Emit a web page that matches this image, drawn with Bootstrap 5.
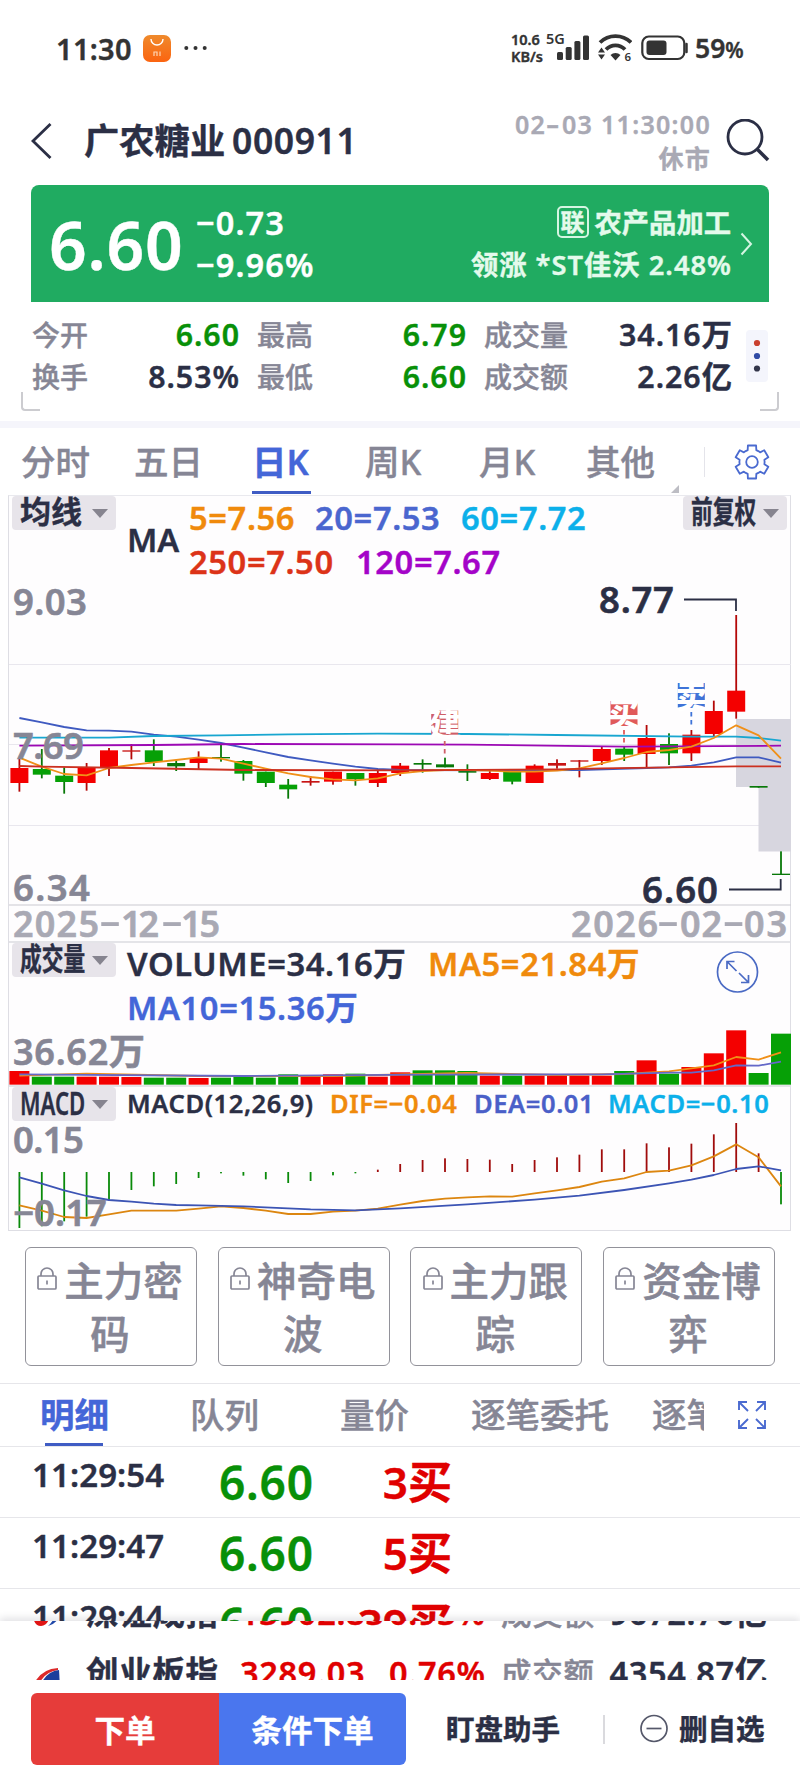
<!DOCTYPE html>
<html lang="zh-CN">
<head>
<meta charset="utf-8">
<meta name="viewport" content="width=device-width, initial-scale=1">
<title>广农糖业 000911</title>
<link href="https://cdn.jsdelivr.net/npm/bootstrap@5.3.0/dist/css/bootstrap.min.css" rel="stylesheet">
<style>
:root{--ink:#2b2f45;--mute:#868695;--pale:#a9a9b4;--up:#e00000;--down:#089008;--brand:#4466d8;--hair:#e6e6ea}
body{font-family:"Noto Sans","Noto Sans CJK SC",sans-serif;font-weight:600;color:var(--ink);background:#fff;width:800px;height:1778px;overflow:hidden;line-height:1;-webkit-text-stroke:.4px}
.cells{display:grid;align-items:center;white-space:nowrap}
.c-mute{color:var(--mute)}.c-up{color:var(--up)}.c-down{color:var(--down)}.c-brand{color:var(--brand)}
.dash{display:inline-block;font-style:normal;transform:translateY(-.06em) scaleX(1.6);margin:0 .13em}
.statusbar{height:98px;padding-bottom:2px;grid-template-columns:56px 87px 41px 327px 46px 41px 43px 54px 60px;color:#333}
.statusbar .clock{font-size:29px;letter-spacing:.3px}
.statusbar .net{font-size:14.5px;line-height:17px;font-weight:600}
.topbar{height:87px;padding-bottom:2px;grid-template-columns:31px 53px 148px 130px 348px 90px}
.topbar .stamp{font-size:25px;line-height:34px;color:var(--pale);letter-spacing:1.3px;margin-right:-1px}
.quote{margin:0 31px;height:117px;background:#20ab61;color:#fff;border-radius:8px 8px 0 0;grid-template-columns:18px 147px 200px 335px 38px}
.quote .px{font-size:66px;letter-spacing:.8px}
.quote .chg{font-size:32.5px;line-height:42px;letter-spacing:1.1px}
.quote .rel{font-size:27.3px;line-height:42px;color:#e4faec}
.rel .lead-up{letter-spacing:1px;margin-right:-1px}
.rel .tagbox{display:inline-block;border:2px solid #d5f5e2;border-radius:5px;width:32px;height:32px;font-size:24px;line-height:27px;text-align:center;margin-right:6px;vertical-align:2px;font-weight:700}
.stats{height:119px;padding:12px 0 23px 32px;grid-template-columns:1fr 68px;position:relative}
.stats dl{display:grid;grid-template-columns:56px 151px 18px 57px 152px 18px 85px 1fr;row-gap:0;line-height:42px;margin:0;font-size:28px}
.stats dt{font-weight:500;grid-column:auto}.stats dd{margin:0 -1px 0 0;text-align:right;font-size:30.3px;letter-spacing:1px}
.stats .gap-l{grid-column:4}.stats .gap-r{grid-column:7}
.more{width:22px;height:52px;background:#f4f5fc;border-radius:4px;margin-left:14px}
.corner{position:absolute;bottom:10px;width:19px;height:19px;border:solid #ccccd0;border-width:0 0 2px 2px;border-radius:0 0 0 4px;left:21px}
.corner.r{left:auto;right:21px;border-width:0 2px 2px 0;border-radius:0 0 4px 0}
.strip{height:7px;background:#f5f5fb}
.ktabs{height:67px;font-size:34.5px;font-weight:500;color:var(--mute);position:relative;grid-template-columns:21px 113px 118px 113px 114px 107px 118px 96px}
.ktabs svg,.dtabs svg{display:block}
.on{color:var(--brand);font-weight:600;position:relative}
.on::after{content:"";position:absolute;height:3px;background:#3f5cc4;left:0}
.ktabs .on::after{width:59px;bottom:-15.5px}
.ktabs span,.dtabs span{line-height:34px}
.panes{margin:0 9px 0 8px;border:1px solid #dedee4;border-top-color:#e9e9ee;background:#fefdfe}
.pane{position:relative}
.pane>svg{position:absolute;left:-9px;top:0;display:block;overflow:visible}
.pane+.pane{border-top:2px solid #e4e4e8}
.p1{height:445px}.p2{height:144px}.p3{height:145px}
.chip{position:absolute;left:3px;top:0;width:104px;height:34px;background:#e7e4ea;border-radius:4px;color:var(--ink);font-size:31px;line-height:33px;white-space:nowrap}
.chip span{position:absolute;left:8px;top:-1px;transform-origin:0 50%}
.chip::after{content:"";position:absolute;right:8px;top:13px;border:8px solid transparent;border-top:9px solid #86848f;border-bottom:0}
.narrow span{transform:scaleX(.7)}
.legend{position:relative;z-index:1;font-size:32.7px;line-height:44px;padding-left:118px;white-space:nowrap;letter-spacing:.6px}
.legend span{display:inline-block}
svg text{font-family:"Noto Sans","Noto Sans CJK SC",sans-serif;font-weight:600}
.vip{padding:16px 25px;gap:20.7px;height:152px}
.vip .btn{flex:1;height:119px;border:1.4px solid #92929a;border-radius:6px;color:var(--mute);font-size:39.5px;line-height:53px;font-weight:500;padding:2px 10px 0 8px;text-align:center;-webkit-text-stroke:.5px}
.vip svg{vertical-align:6px;margin-right:7px}
.dtabs{height:64px;border:solid var(--hair);border-width:1px 0;font-size:34.5px;font-weight:500;color:var(--mute);grid-template-columns:40px 150px 150px 131px 181px 52px 34px 62px}
.dtabs .on::after{width:58px;left:5px;bottom:-14px}
.ticks{height:174px;overflow:hidden}
.tick{height:71px;border-bottom:1px solid var(--hair);grid-template-columns:32px 187px 132px 101px;align-items:start}
.tick .t{font-size:33px;line-height:33px;padding-top:11px;letter-spacing:.1px}
.tick .p{font-size:46px;line-height:46px;padding-top:12px;letter-spacing:.8px}
.tick .v{font-size:44px;line-height:46px;padding-top:12px;text-align:right}
.indices{height:59px;overflow:hidden;position:relative;background:#fff;box-shadow:0 -3px 7px rgba(60,60,80,.14)}
.idx{height:60px;font-size:32.5px;line-height:60px;grid-template-columns:33px 53px 154px 149px 112px 98px 169px;letter-spacing:.7px}
.idx:first-child{margin-top:-38px}
.idx .lab{font-size:30.5px;font-weight:500}
.actions{position:relative;height:98px;background:#fff;padding:13px 0 13px 31px;grid-template-columns:188px 187px 40px 157px 37px 39px 1fr}
.actions .btn{height:72px;border:0;border-radius:6px 0 0 6px;color:#fff;font-size:30.6px;font-weight:700;background:#e63c3a;padding:0;line-height:74px}
.actions .btn+.btn{background:#4a76ee;border-radius:0 6px 6px 0}
.actions .lnk{font-size:28.5px;line-height:72px;font-weight:600}
</style>
</head>
<body>
<header>
  <div class="statusbar cells">
    <i></i><span class="clock">11:30</span>
    <svg width="28" height="27" viewBox="0 0 28 27"><defs><linearGradient id="og" x2="0" y2="1"><stop stop-color="#ef8a2c"/><stop offset="1" stop-color="#fb6410"/></linearGradient></defs><rect width="28" height="27" rx="7" fill="url(#og)"/><path d="M8 4a6 6 0 0 0 12 0" fill="none" stroke="#fff" stroke-width="1.4"/><path d="M11 21v-4h3v4M14 21v-4M17 16.500v4.500" fill="none" stroke="#ffd5b5" stroke-width="1.200"/></svg>
    <svg width="24" height="6" fill="#333"><circle cx="2.300" cy="3" r="2"/><circle cx="11.500" cy="3" r="2"/><circle cx="20.700" cy="3" r="2"/></svg>
    <div class="net">10.6<br>KB/s</div>
    <svg width="42" height="30" viewBox="0 0 42 30" fill="#333" style="overflow:visible"><text x="-11" y="11" font-size="14.500">5G</text><rect y="19" width="6" height="8" rx="1.500"/><rect x="8.700" y="14" width="6" height="13" rx="1.500"/><rect x="17.400" y="8" width="6" height="19" rx="1.500"/><rect x="26" y="2.500" width="6" height="24.500" rx="1.500"/></svg>
    <svg width="34" height="28" viewBox="0 0 34 28" fill="#333"><g fill="none" stroke="#333" stroke-width="3.800"><path d="M2 8.500a22 22 0 0 1 31 0"/><path d="M8 15.500a13 13 0 0 1 19 0"/></g><path d="M12.500 21a7 7 0 0 1 10 0l-5 5.500zM0 18.500l3.500-5 3.500 5zM0 20.500h7l-3.500 5z"/><text x="26.500" y="26.500" font-size="11.500">6</text></svg>
    <svg width="48" height="26" viewBox="0 0 48 26"><rect x="1.300" y="1.500" width="42" height="22.500" rx="6.500" fill="none" stroke="#333" stroke-width="2.200"/><rect x="5.500" y="5.500" width="20" height="14.500" rx="3" fill="#333"/><path d="M45.500 9v8" stroke="#333" stroke-width="2.500" stroke-linecap="round"/></svg>
    <span style="font-size:26.500px">59<small style="font-size:21px">%</small></span>
  </div>
  <div class="topbar cells">
    <i></i>
    <svg width="22" height="38" viewBox="0 0 22 38"><path d="M19.500 2L2 19l17.500 17" fill="none" stroke="#2b2f45" stroke-width="2.800"/></svg>
    <span style="font-size:35.300px">广农糖业</span>
    <span style="font-size:35.500px;letter-spacing:.6px">000911</span>
    <div class="stamp text-end">02<i class="dash">-</i>03 11:30:00<br>休市</div>
    <svg style="margin-left:16px" width="44" height="44" viewBox="0 0 44 44" fill="none" stroke="#2b2f45" stroke-width="2.800"><circle cx="19" cy="18" r="17"/><path d="M31 30l11 11" stroke-width="3.500"/></svg>
  </div>
</header>

<section class="quote cells">
  <i></i><div class="px">6.60</div>
  <div class="chg">−0.73<br>−9.96%</div>
  <div class="rel text-end"><span class="tagbox">联</span>农产品加工<br><span class="lead-up">领涨 *ST佳沃 2.48%</span></div>
  <svg style="margin-left:9px" width="13" height="24" viewBox="0 0 13 24"><path d="M1.500 1.500L11 12 1.500 22.500" fill="none" stroke="#d5f5e2" stroke-width="2"/></svg>
</section>

<section class="stats cells">
  <dl>
    <dt class="c-mute">今开</dt><dd class="c-down">6.60</dd><dt class="c-mute gap-l">最高</dt><dd class="c-down">6.79</dd><dt class="c-mute gap-r">成交量</dt><dd>34.16万</dd>
    <dt class="c-mute">换手</dt><dd>8.53%</dd><dt class="c-mute gap-l">最低</dt><dd class="c-down">6.60</dd><dt class="c-mute gap-r">成交额</dt><dd>2.26亿</dd>
  </dl>
  <svg class="more" viewBox="0 0 22 52"><circle cx="11" cy="13" r="3.100" fill="#c9402f"/><circle cx="11" cy="26" r="3.100" fill="#2f4aa5"/><circle cx="11" cy="38.500" r="3.100" fill="#33364a"/></svg>
  <i class="corner"></i><i class="corner r"></i>
</section>
<div class="strip"></div>

<nav class="ktabs cells">
  <i></i><span>分时</span><span>五日</span><span class="on">日K</span><span>周K</span><span>月K</span><span>其他</span>
  <div class="d-flex align-items-center"><i style="width:1px;height:30px;background:#e4e4ea"></i>
  <svg class="ms-auto" style="margin-right:30px" width="36" height="36" viewBox="-18 -18 36 36" fill="none" stroke="#4a6ad0" stroke-width="1.800" stroke-linejoin="round"><path id="gear"/><circle r="5.800"/></svg></div>
  <svg class="position-absolute" style="left:671px;top:57px" width="8" height="8"><path d="M8 0v8H0z" fill="#bdbdc4"/></svg>
</nav>

<main class="panes">
  <div class="pane p1">
    <svg id="price" width="800" height="445" viewBox="0 496 800 445"></svg>
    <div class="chip"><span>均线</span></div>
    <div class="chip narrow" style="left:auto;right:3px"><span>前复权</span></div>
    <div class="legend d-flex align-items-center"><span style="width:62px;letter-spacing:0">MA</span>
      <div><span style="color:#f08a0c;width:126px">5=7.56</span><span style="color:#4a66cf;width:146px">20=7.53</span><span style="color:#0cb0ea">60=7.72</span><br><span style="color:#dc3318;width:167px">250=7.50</span><span style="color:#a404c8">120=7.67</span></div>
    </div>
  </div>
  <div class="pane p2">
    <svg id="volume" width="800" height="142" viewBox="0 943 800 142"></svg>
    <div class="chip narrow"><span>成交量</span></div>
    <div class="legend" style="margin-top:-1px"><span style="width:301px">VOLUME=34.16万</span><span style="color:#f08a0c">MA5=21.84万</span><br><span style="color:#4466d8">MA10=15.36万</span></div>
  </div>
  <div class="pane p3">
    <svg id="macd" width="800" height="143" viewBox="0 1087 800 143"></svg>
    <div class="chip narrow"><span style="font-size:33px;transform:scaleX(.67)">MACD</span></div>
    <div class="legend" style="font-size:25.500px;line-height:33px"><span style="width:203px">MACD(12,26,9)</span><span style="color:#f08a0c;width:144px">DIF=−0.04</span><span style="color:#4a5fc8;width:134px">DEA=0.01</span><span style="color:#0cb0ea">MACD=−0.10</span></div>
  </div>
</main>

<section class="vip d-flex" id="vip"></section>

<nav class="dtabs cells">
  <i></i><span class="on">明细</span><span>队列</span><span>量价</span><span>逐笔委托</span><span class="overflow-hidden">逐笔</span><i></i>
  <svg width="28" height="28" viewBox="0 0 28 28" fill="none" stroke="#4a6ad0" stroke-width="1.900"><path d="M1 9V1h8M1 1l9 9M19 1h8v8M27 1l-9 9M1 19v8h8M1 27l9-9M27 19v8h-8M27 27l-9-9"/></svg>
</nav>

<section class="ticks">
  <div class="tick cells"><i></i><span class="t">11:29:54</span><span class="p c-down">6.60</span><span class="v c-up">3买</span></div>
  <div class="tick cells"><i></i><span class="t">11:29:47</span><span class="p c-down">6.60</span><span class="v c-up">5买</span></div>
  <div class="tick cells"><i></i><span class="t">11:29:44</span><span class="p c-down">6.60</span><span class="v c-up">39买</span></div>
</section>

<section class="indices">
  <div class="idx cells"><i></i><svg width="27" height="27" viewBox="0 0 27 27"><path d="M0 13l17-2q0 14-9 15-8 0-8-13z" fill="#e01414"/><path d="M27 9q0 14-12 17 8-7 8-17z" fill="#1f47a8"/></svg><span>深证成指</span><span class="c-up">13902.83</span><span class="c-up">0.93%</span><span class="lab c-mute">成交额</span><span class="text-end">9672.76亿</span></div>
  <div class="idx cells"><i></i><svg width="27" height="27" viewBox="0 0 27 27"><path d="M0 26Q7 9 25 8v2Q10 12 5 27z" fill="#dc2a2a"/><path d="M9 22q6-11 17-12l1 17H14z" fill="#1d3f9c"/></svg><span>创业板指</span><span class="c-up">3289.03</span><span class="c-up">0.76%</span><span class="lab c-mute">成交额</span><span class="text-end">4354.87亿</span></div>
</section>

<footer class="actions cells">
  <button class="btn">下单</button><button class="btn">条件下单</button><i></i>
  <span class="lnk">盯盘助手</span>
  <i style="width:2px;height:29px;background:#dadade"></i>
  <svg width="30" height="30" viewBox="0 0 30 30" fill="none" stroke="#55586a" stroke-width="1.700"><circle cx="14" cy="14.500" r="13"/><path d="M6.500 14.500h15"/></svg>
  <span class="lnk">删自选</span>
</footer>

<script src="https://cdn.jsdelivr.net/npm/bootstrap@5.3.0/dist/js/bootstrap.bundle.min.js"></script>
<script>
const X = i => 19.4 + i * 22.4;
const RED = '#f40000', GREEN = '#06a006', DRED = '#b40808', DGREEN = '#087808';
const rect = (x, y, w, h, f, extra = '') => `<rect x="${x}" y="${y}" width="${w}" height="${h}" fill="${f}" ${extra}/>`;
const label = (x, y, w, s, t, f) => `<text x="${x}" y="${y}" font-size="${s}" textLength="${w}" fill="${f}" stroke="${f}" stroke-width=".6">${t}</text>`;
// points are "index:value" pairs; Y maps a value to the drawing's y
const line = (pts, Y, c) => `<polyline fill="none" stroke="${c}" stroke-width="1.800" stroke-linejoin="round" points="${pts.split(' ').map(p => { const [i, v] = p.split(':'); return X(+i) + ',' + Y(+v); }).join(' ')}"/>`;

// candles: direction, high, body top, body bottom, low
const P = v => 580 + v / 3;
const candles = `R533,564,609,635 G507,567,584,595 G562,587,606,641 R549,562,609,632 R504,511,562,588 R492,511,515,538 G478,511,546,558 G543,549,559,573 R514,534,549,567 G492,531,535,545 G540,543,581,602 G575,575,609,621 G597,614,628,656 R588,603,608,617 R575,575,605,614 G579,579,598,617 R573,579,609,621 R549,557,579,588 G538,549,554,578 G533,553,562,562 G553,573,578,603 R570,579,597,600 G572,575,605,613 R553,557,609,609 R538,549,557,566 R540,541,545,592 R498,507,543,555 G498,506,524,543 R435,474,522,563 G460,492,520,555 R450,464,520,543 R362,393,462,468 R105,332,395,416 G618,618,623,623 G814,881,885,885`.split(' ');
let s = '';
for (const y of [664.5, 744.5, 825.5]) s += rect(9, y - .5, 782, 1, '#e9e7ee');
s += rect(9, 904.5, 782, 1, '#c9c9d0');
s += rect(736, 719, 55, 68, '#d7d6df') + rect(758.5, 787, 32.5, 64.5, '#d7d6df');
candles.forEach((c, i) => {
  const up = c[0] === 'R', [h, t, b, l] = c.slice(1).split(',').map(Number);
  s += rect(X(i) - .9, P(h), 1.8, (l - h) / 3, up ? DRED : DGREEN);
  s += rect(X(i) - 9, P(t), 18, (b - t) / 3, b - t < 12 ? (up ? '#c81414' : DGREEN) : up ? RED : GREEN);
});
s += line('0:414 1:427 2:441 3:451 4:452 5:455 6:464 7:470 8:479 9:489 10:503 11:517 12:531 13:541 14:551 15:560 16:567 17:570 22:571 25:570 28:564 29:562 30:557 31:547 32:532 33:532 34:548', P, '#3f5ac0');
s += line('0:473 4:473 6:468 9:466 12:463 16:461 20:462 24:465 30:470 32:470 33:474 34:482', P, '#18a6d0');
s += line('0:497 6:495 10:492 17:493 20:494 27:500 34:497', P, '#9c08b4');
s += line('0:533 1:560 2:582 3:586 4:564 5:555 6:547 7:540 8:532 9:536 10:551 11:566 12:580 13:591 14:598 15:601 16:595 17:580 18:573 19:570 20:570 21:572 22:575 23:575 24:572 25:565 26:550 27:534 28:516 29:510 30:500 31:474 32:436 33:466 34:536', P, '#f09018');
s += line('0:558 1:560 5:564 10:570 17:571 24:568 26:565 32:559 34:559', P, '#cc3020');
s += '<path d="M684 599.500H736V611M729 889.500H780.700V879" fill="none" stroke="#2b2f45" stroke-width="1.800"/>';
const mark = (x, y, t, c, y2) => rect(x - 13.5, y, 27, 25, c) + `<text x="${x}" y="${y + 25}" font-size="32" style="font-weight:900" text-anchor="middle" fill="#fff">${t}</text><path d="M${x} ${y2}v16" stroke="${c}" stroke-width="1.800" stroke-dasharray="4.500 3.500"/>`;
s += mark(444.7, 710.5, '建', '#cf5f68', 741) + mark(624, 701, '买', '#e05a5a', 730) + mark(691.3, 683, '卖', '#3f74d8', 712);
s += label(13, 615, 74, 36.5, '9.03', '#868695') + label(13, 759, 71, 36.5, '7.69', '#868695') + label(13, 901, 77, 36.5, '6.34', '#868695');
s += label(599, 613, 75, 36.5, '8.77', '#2b2f45') + label(642, 903, 76, 36.5, '6.60', '#2b2f45');
// axis dates: digits in three groups, joined by wide raised hyphens
for (const [x, w, t] of [[13, 86, '2025'], [121, 38, '12'], [181, 39, '15'], [571, 87, '2026'], [680, 42, '02'], [744, 43, '03']]) s += label(x, 937, w, 36, t, '#a9a9b4');
for (const x of [99, 161, 657, 722.5]) s += `<text x="${x}" y="933.500" font-size="36" fill="#a9a9b4" textLength="22" lengthAdjust="spacingAndGlyphs">-</text>`;
price.innerHTML = s;

// volume bars: direction and top edge
const V = v => 930 + v / 3;
s = label(13, 1065, 132, 36, '36.62万', '#868695');
'R423 G440 G440 R440 R440 R441 G443 G443 R444 G443 G441 G443 G433 R440 R433 G431 R440 R427 G421 G421 G423 R437 G437 R437 R437 R437 R437 G423 R391 G431 R411 R370 R301 G429 G311'.split(' ').forEach((b, i) => {
  s += rect(X(i) - 10, V(+b.slice(1)), 20, (464 - b.slice(1)) / 3, b[0] === 'R' ? RED : GREEN);
});
s += line('0:437 3:431 8:438 14:438 20:429 24:435 27:432 29:424 31:406 32:381 33:389 34:367', V, '#f09018');
s += line('0:433 10:438 18:434 26:433 29:428 30:428 31:421 32:406 33:407 34:395', V, '#6468c8');
s += '<g fill="none" stroke="#4a6ac4" stroke-width="1.700"><circle cx="737.500" cy="972" r="20"/><path d="M727 969v-7.500h7.500M727 961.500l9.500 9.500M748.500 975v7.500H741M748.500 982.500L739 973"/></g>';
volume.innerHTML = s;

// MACD histogram ends, measured from the zero line
s = '';
[894, 889, 874, 860, 811, 780, 769, 762, 744, 730, 737, 748, 759, 753, 736, 730, 719, 702, 690, 685, 687, 689, 702, 690, 682, 674, 658, 658, 640, 652, 641, 613, 579, 670, 823].forEach((v, i) => {
  s += rect(X(i) - .9, V(Math.min(v, 726)), 1.8, Math.abs(v - 726) / 3, v < 726 ? '#a00c0c' : '#0a8a0a');
});
s += line('0:826 1:842 2:861 3:864 4:853 5:842 7:842 8:836 9:829 10:834 11:842 12:852 13:852 14:845 15:842 16:836 17:824 18:813 19:806 20:802 21:799 22:800 23:790 24:781 25:771 26:755 27:745 28:726 29:722 30:706 31:679 32:643 33:682 34:769', V, '#dc8610');
s += line('0:742 1:761 2:781 3:798 4:810 5:815 6:821 7:825 8:826 10:829 13:838 15:841 17:835 20:823 23:809 25:797 27:780 29:760 30:749 31:735 32:717 33:709 34:721', V, '#3c54b4');
s += label(13, 1153, 71, 36.5, '0.15', '#868695') + label(13, 1226, 94, 36.5, '−0.17', '#868695');
macd.innerHTML = s;

// six-tooth gear outline
let g = '';
for (let k = 0; k < 6; k++) for (const [r, a] of [[12.6, -30], [12.6, -20], [17, -14], [17, 14], [12.6, 20]]) {
  const t = (k * 60 + a - 90) * Math.PI / 180;
  g += (g ? 'L' : 'M') + (r * Math.cos(t)).toFixed(2) + ' ' + (r * Math.sin(t)).toFixed(2);
}
gear.setAttribute('d', g + 'Z');

vip.innerHTML = ['主力密码', '神奇电波', '主力跟踪', '资金博弈'].map(t =>
  `<button class="btn"><svg width="20" height="23" viewBox="0 0 20 23" fill="none" stroke="#868695" stroke-width="1.700"><rect x="1" y="9" width="18" height="13" rx="1"/><path d="M4 9V7a6 6 0 0 1 12 0v2M10 13.500v4"/></svg>${t.slice(0, 3)}<br>${t.slice(3)}</button>`).join('');
</script>
</body>
</html>
